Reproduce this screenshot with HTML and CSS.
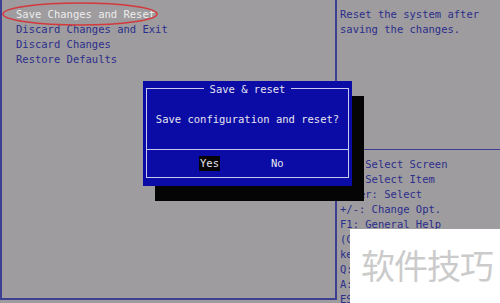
FILE: index.html
```html
<!DOCTYPE html>
<html lang="en">
<head>
<meta charset="UTF-8">
<meta name="viewport" content="width=device-width, initial-scale=1.0">
<title>Save &amp; Exit</title>
<link rel="stylesheet" href="styles.css">
</head>
<body>

<div class="screen">
    <div class="menu-pane">
        <ul class="menu">
            <li class="selected">Save Changes and Reset</li>
            <li>Discard Changes and Exit</li>
            <li>Discard Changes</li>
            <li>Restore Defaults</li>
        </ul>
    </div>
    <div class="help-pane">
        <div class="help-text">
            Reset the system after<br>
            saving the changes.
        </div>
        <div class="keys">
            <div>&rarr;&larr;: Select Screen</div>
            <div>&uarr;&darr;: Select Item</div>
            <div>Enter: Select</div>
            <div>+/-: Change Opt.</div>
            <div>F1: General Help</div>
            <!-- the rest is cut off by the watermark -->
            <div>(C</div>
            <div>ke</div>
            <div>Q:</div>
            <div>A:</div>
            <div>ES</div>
        </div>
    </div>

    <!-- red marker round the selected item -->
    <svg class="marker" width="160" height="30" viewBox="0 0 160 30">
        <ellipse cx="80" cy="14" rx="77" ry="11" fill="none" stroke="#d3393c" stroke-width="1.6"/>
    </svg>

    <div class="dialog">
        <div class="frame">
            <div class="dialog-body">
                <div class="dialog-title">Save &amp; reset</div>
                <div class="dialog-msg">Save configuration and reset?</div>
            </div>
            <div class="dialog-buttons">
                <span class="btn active">Yes</span>
                <span class="btn">No</span>
            </div>
        </div>
    </div>

    <div class="watermark">软件技巧</div>
</div>

</body>
</html>
```

FILE: styles.css
```css
body {
    margin: 0;
    padding: 0;
    background-color: #9e9c9e;
}
.screen {
    position: relative;
    width: 500px;
    height: 303px;
    overflow: hidden;
    display: grid;
    grid-template-columns: 337px 1fr;
    background-color: #9e9c9e;
    font-family: "DejaVu Sans Mono", "Liberation Mono", monospace;
    font-size: 10.5px;
    line-height: 15px;
    color: #2c2e8c;
}
.menu-pane {
    height: 300px;
    box-sizing: border-box;
    border-left: 2px solid #3d4090;
    border-right: 2px solid #3d4090;
    border-bottom: 2px solid #3d4090;
    padding: 7px 0 0 14px;
}
.menu {
    list-style: none;
    margin: 0;
    padding: 0;
}
.menu li.selected {
    color: #ededed;
}
.help-pane {
    display: flex;
    flex-direction: column;
    overflow: hidden;
}
.help-text {
    flex-shrink: 0;
    height: 149px;
    box-sizing: border-box;
    padding: 7px 0 0 3px;
}
.keys {
    flex-shrink: 0;
    border-top: 1px solid #3d4090;
    padding: 7px 0 0 3px;
    white-space: nowrap;
}
.marker {
    position: absolute;
    left: 0;
    top: 0;
}
.dialog {
    position: absolute;
    left: 143px;
    top: 81px;
    width: 209px;
    height: 105px;
    box-sizing: border-box;
    padding: 7px 3px 8px 3px;
    background-color: #0b0ba6;
    box-shadow: 12px 15px 0 #050505;
    color: #e6e6ee;
}
.frame {
    height: 100%;
    box-sizing: border-box;
    border: 1px solid #c9c9ef;
    display: flex;
    flex-direction: column;
}
.dialog-body {
    height: 60px;
    border-bottom: 1px solid #c9c9ef;
}
.dialog-title {
    width: fit-content;
    margin: -7px auto 0;
    padding: 0 6px;
    background-color: #0b0ba6;
}
.dialog-msg {
    margin-top: 15px;
    text-align: center;
}
.dialog-buttons {
    flex: 1;
    display: flex;
    align-items: center;
    gap: 50px;
    padding-left: 52px;
}
.btn {
    padding: 0 1px;
}
.btn.active {
    background-color: #050505;
}
.watermark {
    position: absolute;
    left: 350px;
    top: 229px;
    right: 0;
    bottom: 0;
    background-color: #fff;
    color: #cbcbcb;
    font-family: "Noto Sans CJK SC", sans-serif;
    font-size: 34px;
    line-height: 72px;
    padding-left: 11px;
    letter-spacing: -1px;
}
```
